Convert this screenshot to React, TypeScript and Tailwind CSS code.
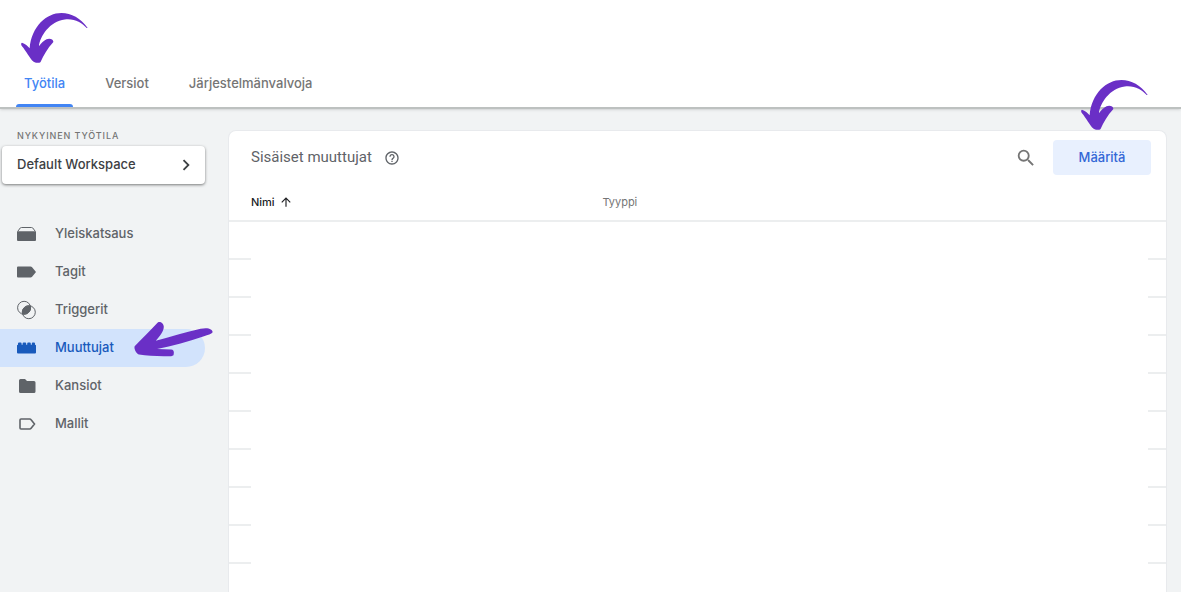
import React from 'react';
import { MdArrowUpward, MdChevronRight, MdHelpOutline, MdSearch } from 'react-icons/md';

const OverviewIcon: React.FC = () => (
  <svg viewBox="0 0 20 16" className="w-5 h-4" fill="currentColor">
    <path d="M1 5.2h19V14q0 1-1 1H2q-1 0-1-1z" />
    <path d="M2 5 4.2 2Q4.7 1.5 5.5 1.5h10q.8 0 1.3.5L19 5" fill="none" stroke="currentColor" strokeWidth="1" />
  </svg>
);

const TagIcon: React.FC = () => (
  <svg viewBox="0 0 20 12" className="w-5 h-3" fill="currentColor">
    <path d="M2 0.5h12.5q1 0 1.6.8L20 6l-3.9 4.7q-.6.8-1.6.8H2q-1 0-1-1v-9q0-1 1-1z" />
  </svg>
);

const TriggerIcon: React.FC = () => (
  <svg viewBox="0 0 20 20" className="w-5 h-5" fill="none" stroke="currentColor" strokeWidth="1">
    <circle cx="8.1" cy="7.8" r="6.5" />
    <circle cx="12.8" cy="12.2" r="6.5" />
    <path d="M6.5 13.9A6.5 6.5 0 0 1 14.4 6.1 6.5 6.5 0 0 1 6.5 13.9z" fill="currentColor" />
  </svg>
);

const VariableIcon: React.FC = () => (
  <svg viewBox="0 0 20 12" className="w-5 h-3" fill="currentColor">
    <path d="M1 3.5q0-.8 1-.8V1.5q0-1 1-1h1.6q1 0 1 1v1.2h1V1.5q0-1 1-1h1.6q1 0 1 1v1.2h1V1.5q0-1 1-1h1.6q1 0 1 1v1.2h1V1.5q0-1 1-1H18q1 0 1 1v1.2q1 0 1 .8v7q0 1-1 1H2q-1 0-1-1z" />
  </svg>
);

const FolderIcon: React.FC = () => (
  <svg viewBox="0 0 20 14" className="w-5 h-3.5" fill="currentColor">
    <path d="M4.5 0H9l2 2h7q1.5 0 1.5 1.5v9Q19.500 14 18 14H4.500Q3 14 3 12.500v-11Q3 0 4.500 0z" />
  </svg>
);

const TemplateIcon: React.FC = () => (
  <svg viewBox="0 0 20 12" className="w-5 h-3" fill="none" stroke="currentColor" strokeWidth="1.6">
    <path d="M5 1h8.700q.9 0 1.400.700L18.500 6l-3.400 4.300q-.5.700-1.400.700H5q-1 0-1-1V2q0-1 1-1z" />
  </svg>
);

const CurvedArrow: React.FC<{ className: string }> = ({ className }) => (
  <svg
    viewBox="63 38 202 150"
    className={`absolute w-[67px] h-[50px] pointer-events-none ${className}`}
    fill="#6a2fc6"
    aria-hidden="true"
  >
    <path d="M264 83C243 54 215 38 185 38C140 38 95 78 89 144C84 138 75 129 66 127C62 128 63 134 66 138C78 152 90 175 100 184C106 189 118 189 122 185C132 165 142 145 160 126C163 118 150 112 140 117C132 121 124 129 117 138C120 108 150 62 195 57C225 54 245 65 261 83Z" />
  </svg>
);

const StraightArrow: React.FC<{ className: string }> = ({ className }) => (
  <svg
    viewBox="401 5 236 107"
    className={`absolute w-[79px] h-9 pointer-events-none ${className}`}
    fill="#6a2fc6"
    aria-hidden="true"
  >
    <path d="M403 80C425 58 448 34 472 9C480 4 490 12 490 22C490 36 478 50 466 64C510 52 555 38 600 28C622 23 636 29 636 38C632 44 622 46 610 50C565 66 515 80 470 88L512 90C521 91 521 98 519 107C512 112 500 110 490 110C462 110 438 109 416 105C408 102 400 88 403 80Z" />
  </svg>
);

const tabs = [
  { label: 'Työtila', active: true },
  { label: 'Versiot', active: false },
  { label: 'Järjestelmänvalvoja', active: false },
];

const navItems = [
  { label: 'Yleiskatsaus', icon: <OverviewIcon /> },
  { label: 'Tagit', icon: <TagIcon /> },
  { label: 'Triggerit', icon: <TriggerIcon /> },
  { label: 'Muuttujat', icon: <VariableIcon />, active: true },
  { label: 'Kansiot', icon: <FolderIcon /> },
  { label: 'Mallit', icon: <TemplateIcon /> },
];

const rows = Array.from({ length: 9 }, (_, i) => i);

const App: React.FC = () => {
  return (
    <div className="min-h-screen flex flex-col bg-[#f1f3f4] font-[Inter,sans-serif] text-[#5f6368]">
      <header className="relative bg-white pt-15 border-b-2 border-[#bdc1c0] shadow-sm">
        <nav className="flex gap-6 px-4">
          {tabs.map((tab) => (
            <a
              key={tab.label}
              href="#"
              className={`relative h-[47px] px-2 flex items-center text-[13px] font-medium ${
                tab.active ? 'text-[#4285f4]' : 'text-[#757575]'
              }`}
            >
              {tab.label}
              {tab.active && (
                <span className="absolute inset-x-0 bottom-0 h-[3px] rounded-t bg-[#4285f4]" />
              )}
            </a>
          ))}
        </nav>
        <CurvedArrow className="left-[21px] top-[13px]" />
      </header>

      <div className="flex-1 flex">
        <aside className="w-[205px] shrink-0 mr-[23px]">
          <p className="pt-[19px] pl-[17px] text-[9px] leading-4 font-medium tracking-widest text-[#757575]">
            NYKYINEN TYÖTILA
          </p>
          <button className="mt-0.5 ml-0.5 w-[203px] h-[38px] pl-[15px] pr-2 flex items-center justify-between rounded bg-white shadow-[0_1px_3px_rgba(0,0,0,0.5)] text-[13px] font-medium text-[#3c4043]">
            Default Workspace
            <MdChevronRight size={22} />
          </button>
          <nav className="mt-[31px]">
            {navItems.map((item) => (
              <a
                key={item.label}
                href="#"
                className={`relative h-[38px] pl-4 flex items-center gap-[19px] text-[13px] font-medium ${
                  item.active ? 'rounded-r-full bg-[#d2e3fc] text-[#185abc]' : ''
                }`}
              >
                {item.icon}
                {item.label}
                {item.active && <StraightArrow className="left-[134px] -top-2" />}
              </a>
            ))}
          </nav>
        </aside>

        <main className="flex-1 mt-[21px] mr-3.5 rounded-t-lg border border-b-0 border-[#e8eaed] bg-white">
          <div className="h-[53px] pl-[22px] pr-[15px] flex items-center">
            <h1 className="font-[Roboto,sans-serif] text-[15px]">Sisäiset muuttujat</h1>
            <button aria-label="Ohje" className="ml-3">
              <MdHelpOutline size={16} />
            </button>
            <button aria-label="Haku" className="ml-auto mr-4 text-[#757575]">
              <MdSearch size={22} />
            </button>
            <div className="relative">
              <button className="w-[98px] h-[35px] rounded bg-[#e8f0fe] text-[13px] font-medium text-[#3367d6]">
                Määritä
              </button>
              <CurvedArrow className="left-7 -top-15" />
            </div>
          </div>

          <table className="w-full table-fixed border-separate border-spacing-0 text-left text-[11px]">
            <colgroup>
              <col className="w-[22px]" />
              <col className="w-[37.5%]" />
              <col />
              <col className="w-[18px]" />
            </colgroup>
            <thead>
              <tr className="h-[38px]">
                <td className="border-b-2 border-[#eceeef]" />
                <th className="border-b-2 border-[#eceeef] font-medium text-[#202124]">
                  <span className="flex items-center gap-1">
                    Nimi
                    <MdArrowUpward size={14} />
                  </span>
                </th>
                <th className="border-b-2 border-[#eceeef] font-normal text-[#757575]">Tyyppi</th>
                <td className="border-b-2 border-[#eceeef]" />
              </tr>
            </thead>
            <tbody>
              {rows.map((row) => (
                <tr key={row} className="h-[38px]">
                  <td className="border-b-2 border-[#eceeef]" />
                  <td />
                  <td />
                  <td className="border-b-2 border-[#eceeef]" />
                </tr>
              ))}
            </tbody>
          </table>
        </main>
      </div>
    </div>
  );
};

export default App;
